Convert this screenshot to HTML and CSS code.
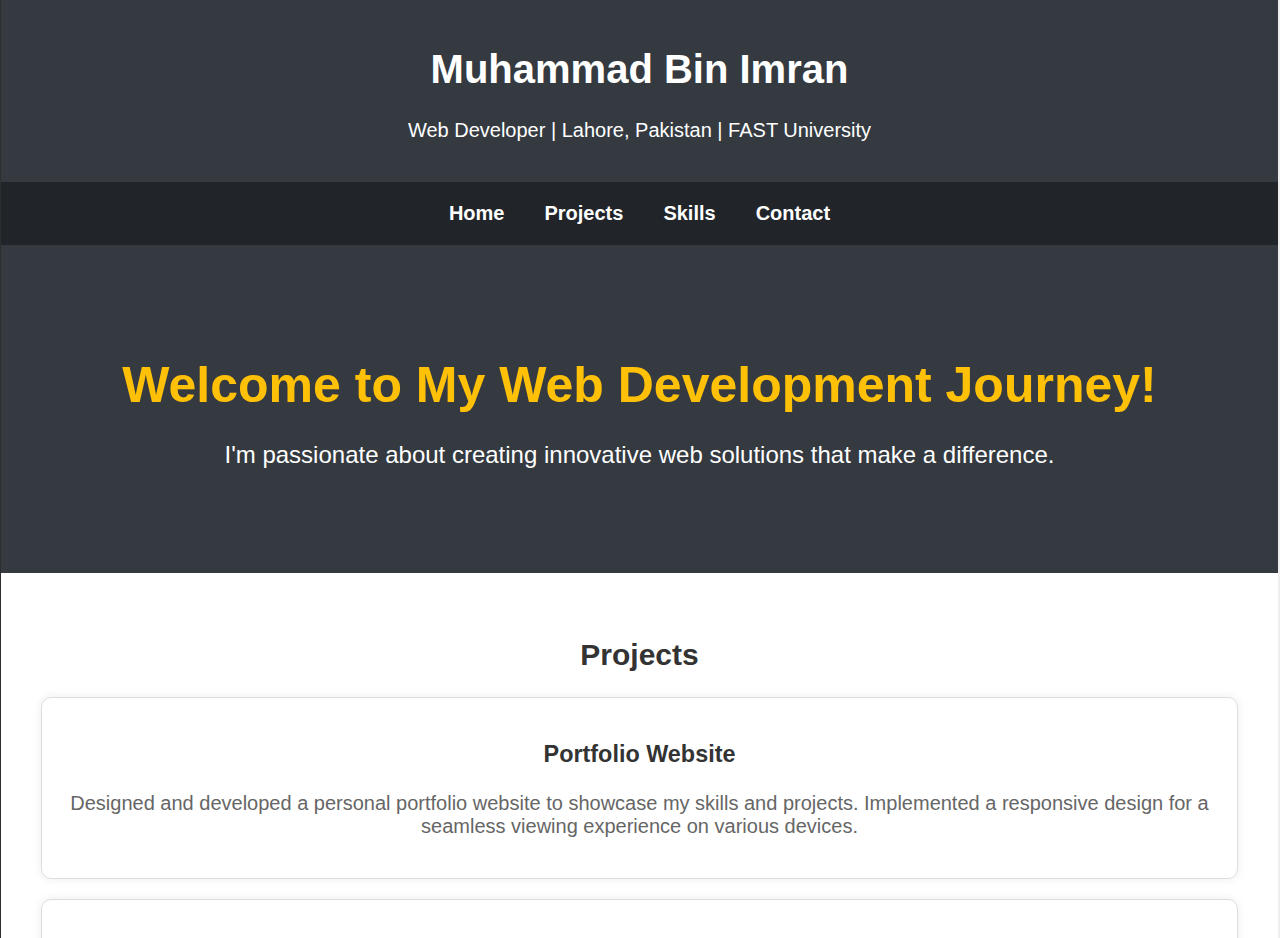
FILE: index.html
```html
<!DOCTYPE html>
<html lang="en">
<head>
<meta charset="utf-8">
<title>Muhammad Bin Imran - Portfolio</title>
<link rel="stylesheet" href="styles.css">
</head>
<body>
<header class="site-header">
  <h1 class="site-title">Muhammad Bin Imran</h1>
  <p class="site-tagline">Web Developer | Lahore, Pakistan | FAST University</p>
</header>
<nav class="site-nav">
  <a href="#home">Home</a>
  <a href="#projects">Projects</a>
  <a href="#skills">Skills</a>
  <a href="#contact">Contact</a>
</nav>
<section class="hero" id="home">
  <h1 class="hero-title">Welcome to My Web Development Journey!</h1>
  <p class="hero-text">I'm passionate about creating innovative web solutions that make a difference.</p>
</section>
<section class="projects" id="projects">
  <h2 class="section-title">Projects</h2>
  <div class="card">
    <h3 class="card-title">Portfolio Website</h3>
    <p class="card-text">Designed and developed a personal portfolio website to showcase my skills and projects. Implemented a responsive design for a seamless viewing experience on various devices.</p>
  </div>
  <div class="card">
    <h3 class="card-title">Task Manager App</h3>
    <p class="card-text">Built a task management web application with features to add, edit and organize daily tasks using HTML, CSS and JavaScript.</p>
  </div>
</section>
</body>
</html>
```
FILE: styles.css
```css
html {
  background: #efefef;
}
body {
  margin: 0 2px 0 0;
  border-left: 1px solid #2e2e2e;
  background: #ffffff;
  font-family: "Liberation Sans", Arial, sans-serif;
  font-size: 20px;
  color: #333;
}
.site-header {
  background: #343a40;
  color: #fff;
  text-align: center;
  padding: 0 0 40px;
}
.site-title {
  margin: 0;
  padding-top: 46px;
  font-size: 40px;
  line-height: 46px;
}
.site-tagline {
  margin: 27px 0 0;
  font-size: 20px;
  line-height: 23px;
}
.site-nav {
  background: #212529;
  display: flex;
  justify-content: center;
  padding: 20px 0;
}
.site-nav a {
  color: #fff;
  text-decoration: none;
  font-weight: bold;
  font-size: 20px;
  line-height: 23px;
  margin: 0 20px;
}
.hero {
  background: #343a40;
  color: #fff;
  text-align: center;
  padding: 112px 20px 104px;
}
.hero-title {
  margin: 0 0 27px;
  color: #ffc107;
  font-size: 50px;
  line-height: 57px;
}
.hero-text {
  margin: 0;
  font-size: 24px;
  line-height: 28px;
}
.projects {
  padding: 40px;
  text-align: center;
}
.section-title {
  font-size: 30px;
  margin: 25px 0;
  color: #333;
}
.card {
  background: #fff;
  border: 1px solid #ddd;
  border-radius: 10px;
  box-shadow: 0 0 10px rgba(0, 0, 0, 0.08);
  padding: 20px;
  margin-bottom: 20px;
}
.card-title {
  font-size: 23.4px;
  margin: 23.4px 0;
  color: #333;
}
.card-text {
  font-size: 20px;
  line-height: 23px;
  color: #666;
  margin: 20px 0;
}
```
